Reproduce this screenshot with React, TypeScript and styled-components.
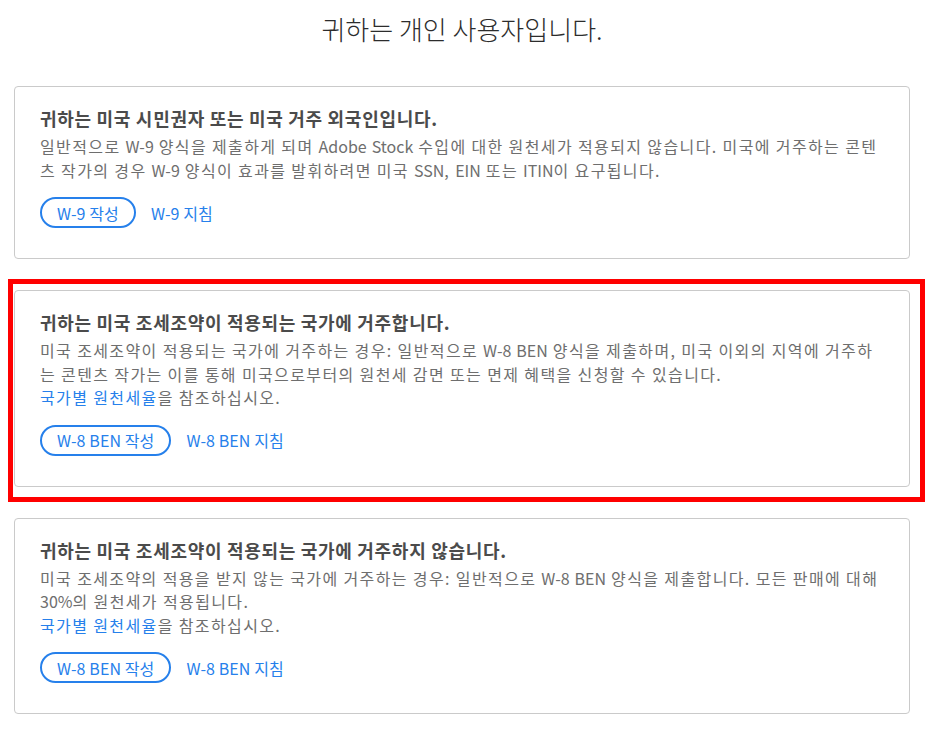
import React from "react";
import styled, { createGlobalStyle } from "styled-components";

const GlobalStyle = createGlobalStyle`
  body {
    margin: 0;
    background: #fff;
    font-family: "Noto Sans CJK KR", "Noto Sans", sans-serif;
  }
`;

type Option = {
  title: string;
  body: string[];
  rateLink?: boolean;
  form: string;
  highlight?: boolean;
};

const options: Option[] = [
  {
    title: "귀하는 미국 시민권자 또는 미국 거주 외국인입니다.",
    body: [
      "일반적으로 W-9 양식을 제출하게 되며 Adobe Stock 수입에 대한 원천세가 적용되지 않습니다. 미국에 거주하는 콘텐츠 작가의 경우 W-9 양식이 효과를 발휘하려면 미국 SSN, EIN 또는 ITIN이 요구됩니다.",
    ],
    form: "W-9",
  },
  {
    title: "귀하는 미국 조세조약이 적용되는 국가에 거주합니다.",
    body: [
      "미국 조세조약이 적용되는 국가에 거주하는 경우: 일반적으로 W-8 BEN 양식을 제출하며, 미국 이외의 지역에 거주하는 콘텐츠 작가는 이를 통해 미국으로부터의 원천세 감면 또는 면제 혜택을 신청할 수 있습니다.",
    ],
    rateLink: true,
    form: "W-8 BEN",
    highlight: true,
  },
  {
    title: "귀하는 미국 조세조약이 적용되는 국가에 거주하지 않습니다.",
    body: [
      "미국 조세조약의 적용을 받지 않는 국가에 거주하는 경우: 일반적으로 W-8 BEN 양식을 제출합니다. 모든 판매에 대해 30%의 원천세가 적용됩니다.",
    ],
    rateLink: true,
    form: "W-8 BEN",
  },
];

// latin runs are set tighter than the hangul around them
const mixed = (text: string) =>
  text
    .split(/([A-Za-z0-9%-]+)/)
    .map((part, i) => (i % 2 ? <Latin key={i}>{part}</Latin> : part));

function App() {
  return (
    <>
      <GlobalStyle />
      <Page>
        <Title>귀하는 개인 사용자입니다.</Title>
        <CardList>
          {options.map((o) => (
            <Card key={o.title}>
              {o.highlight && <Highlight />}
              <CardTitle>{o.title}</CardTitle>
              {o.body.map((b) => (
                <Body key={b}>{mixed(b)}</Body>
              ))}
              {o.rateLink && (
                <Body>
                  <InlineLink href="#">국가별 원천세율</InlineLink>을 참조하십시오.
                </Body>
              )}
              <Actions>
                <PillButton>{o.form} 작성</PillButton>
                <TextLink href="#">{o.form} 지침</TextLink>
              </Actions>
            </Card>
          ))}
        </CardList>
      </Page>
    </>
  );
}

const Page = styled.div`
  padding: 0 25px 20px 14px;
`;

const Title = styled.h1`
  margin: 0;
  padding: 11px 0 0;
  height: 86px;
  box-sizing: border-box;
  text-align: center;
  font-size: 26px;
  line-height: 36px;
  font-weight: 300;
  color: #2c2c2c;
`;

const CardList = styled.div`
  display: flex;
  flex-direction: column;
  gap: 31px;
`;

const Card = styled.section`
  position: relative;
  border: 1px solid #cacaca;
  border-radius: 4px;
  padding: 19px 25px 30px 25px;
`;

const Highlight = styled.div`
  position: absolute;
  top: -12px;
  left: -7px;
  right: -16px;
  bottom: -16px;
  border: 5px solid #ff0000;
  pointer-events: none;
`;

const CardTitle = styled.h2`
  margin: 0 0 5px;
  font-size: 18px;
  line-height: 24px;
  letter-spacing: 0.7px;
  font-weight: 700;
  color: #4b4b4b;
`;

const Body = styled.p`
  margin: 0;
  font-size: 16px;
  line-height: 23.5px;
  letter-spacing: 1.38px;
  color: #6e6e6e;
`;

const Latin = styled.span`
  letter-spacing: 0;
`;

const InlineLink = styled.a`
  color: #2680eb;
  text-decoration: none;
`;

const Actions = styled.div`
  display: flex;
  align-items: center;
  gap: 15px;
  margin-top: 15px;
`;

const PillButton = styled.button`
  height: 31px;
  padding: 0 15px;
  border: 2px solid #2680eb;
  border-radius: 16px;
  background: #fff;
  color: #2680eb;
  font-family: inherit;
  font-size: 16px;
  letter-spacing: 0.1px;
  cursor: pointer;
`;

const TextLink = styled.a`
  color: #2680eb;
  font-size: 16px;
  letter-spacing: 0.1px;
  text-decoration: none;
`;

export default App;
